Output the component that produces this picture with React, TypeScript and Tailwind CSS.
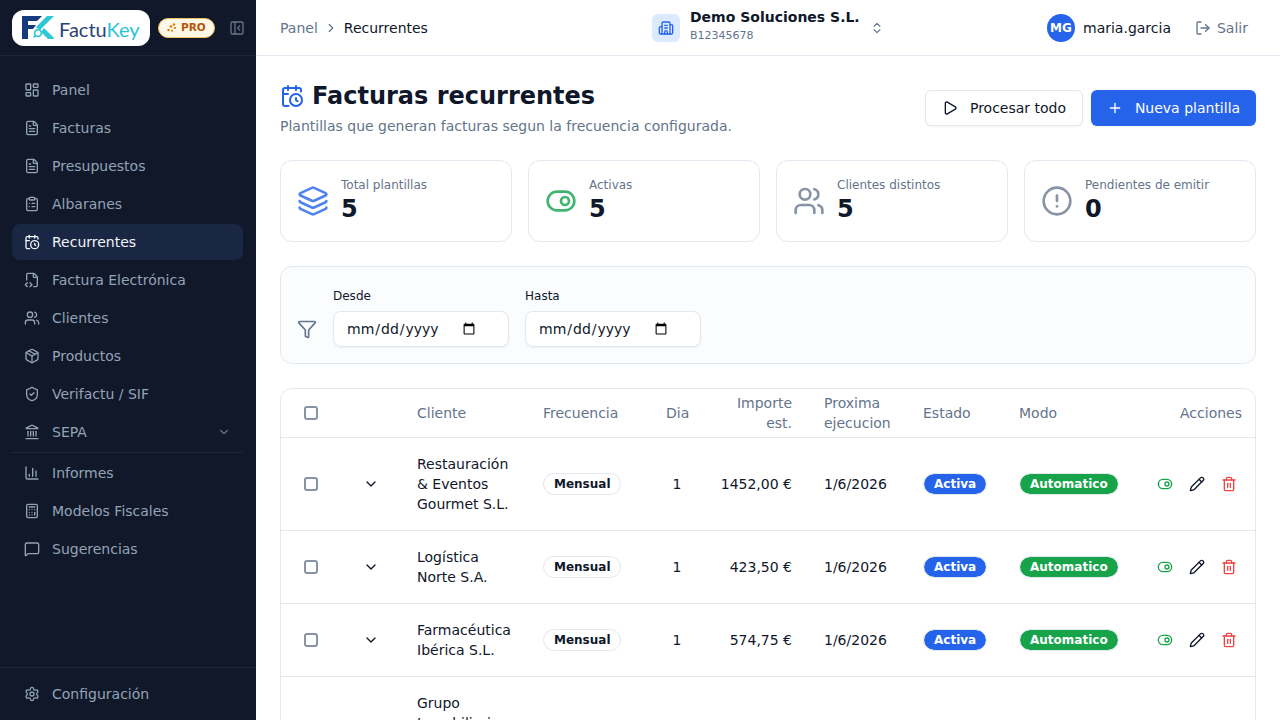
import React from "react";
import {
  LayoutDashboard, FileText, ClipboardList, CalendarClock, FileCode2, Users, Package, ShieldCheck, Landmark,
  ChartColumn, Calculator, MessageSquare, Settings, PanelLeftClose, ChevronRight, ChevronDown, ChevronsUpDown,
  Building2, LogOut, Play, Plus, Layers, ToggleRight, CircleAlert, Funnel, Pencil, Trash2,
} from "lucide-react";

const top = [
  { label: "Panel", Icon: LayoutDashboard },
  { label: "Facturas", Icon: FileText },
  { label: "Presupuestos", Icon: FileText },
  { label: "Albaranes", Icon: ClipboardList },
  { label: "Recurrentes", Icon: CalendarClock, active: true },
  { label: "Factura Electrónica", Icon: FileCode2 },
  { label: "Clientes", Icon: Users },
  { label: "Productos", Icon: Package },
  { label: "Verifactu / SIF", Icon: ShieldCheck },
  { label: "SEPA", Icon: Landmark, caret: true },
];
const bottom = [
  { label: "Informes", Icon: ChartColumn },
  { label: "Modelos Fiscales", Icon: Calculator },
  { label: "Sugerencias", Icon: MessageSquare },
];

type Item = { label: string; Icon: React.ComponentType<any>; active?: boolean; caret?: boolean };

function NavItem({ label, Icon, active, caret }: Item) {
  return (
    <div className={`flex h-9 items-center gap-3 rounded-lg px-3 text-sm ${active ? "bg-[#1a2744] text-[#f1f5f9]" : "text-[#94a3b8]"}`}>
      <Icon size={16} strokeWidth={2} className="shrink-0" />
      <span className="flex-1">{label}</span>
      {caret && <ChevronDown size={14} className="text-[#64748b]" />}
    </div>
  );
}

function Logo() {
  return (
    <div className="flex h-9 w-[138px] items-center gap-[5px] rounded-xl bg-white pl-[9px]">
      <svg width="33" height="26" viewBox="0 0 33 26" fill="none" className="shrink-0">
        <path d="M1 1h20l-5 5H7v4h8l-3 4H7v10H1z" fill="#153a7d" />
        <path d="M33 1h-7L15 12l4 3z" fill="#2fc6d6" />
        <path d="M23 13l11 11h-7l-7-7z" fill="#2fc6d6" />
        <circle cx="17" cy="18" r="3.4" fill="#fff" stroke="#2fc6d6" strokeWidth="1.7" />
        <path d="M14.5 20.5l-2 2" stroke="#2fc6d6" strokeWidth="1.7" />
      </svg>
      <span className="mt-[2px] font-['Lato',sans-serif] text-[20px] leading-none">
        <span className="text-[#2b4278]">Factu</span>
        <span className="text-[#2bc4d6]">Key</span>
      </span>
    </div>
  );
}

function Sidebar() {
  return (
    <aside className="flex h-full w-64 shrink-0 flex-col bg-[#101829]">
      <div className="flex h-14 shrink-0 items-center border-b border-[#1a2539] pl-3 pr-[11px]">
        <Logo />
        <div className="ml-2 flex h-5 w-[57px] items-center gap-1 rounded-full border border-[#f0c15c] bg-[#fff8e6] pl-2 text-[10.5px] font-bold text-[#b45309]">
          <svg width="10" height="10" viewBox="0 0 10 10" fill="#d97706" className="shrink-0">
            <circle cx="7" cy="1.5" r="1.2" /><circle cx="4" cy="3.5" r="1.3" /><circle cx="8" cy="5" r="1.1" /><circle cx="1.5" cy="7" r="1.2" /><circle cx="5" cy="7.8" r="1" />
          </svg>
          PRO
        </div>
        <PanelLeftClose size={16} className="ml-auto text-[#64748b]" />
      </div>
      <nav className="flex flex-1 flex-col pl-3 pr-[13px] pt-4">
        <div className="flex flex-col gap-[2px]">
          {top.map((i) => <NavItem key={i.label} {...i} />)}
        </div>
        <div className="mb-[2px] mt-[2px] h-px bg-[#1e293b]" />
        <div className="flex flex-col gap-[2px]">
          {bottom.map((i) => <NavItem key={i.label} {...i} />)}
        </div>
      </nav>
      <div className="border-t border-[#1e293b] px-3 pb-2 pt-2">
        <NavItem label="Configuración" Icon={Settings} />
      </div>
    </aside>
  );
}

function Header() {
  return (
    <header className="flex h-14 shrink-0 items-center border-b border-[#e2e8f0] bg-white pl-6 pr-8">
      <div className="flex w-[372px] items-center gap-[6px] text-sm">
        <span className="text-[#64748b]">Panel</span>
        <ChevronRight size={14} className="text-[#64748b]" />
        <span className="text-[#0f172a]">Recurrentes</span>
      </div>
      <div className="flex items-center">
        <div className="flex h-7 w-7 items-center justify-center rounded-md bg-[#dbeafe]">
          <Building2 size={16} className="text-[#2563eb]" />
        </div>
        <div className="ml-[10px] -mt-[4px] flex flex-col">
          <span className="text-sm font-bold leading-5 text-[#0f172a]">Demo Soluciones S.L.</span>
          <span className="mt-px text-[11px] leading-4 text-[#64748b]">B12345678</span>
        </div>
        <ChevronsUpDown size={14} className="ml-[10px] text-[#64748b]" />
      </div>
      <div className="ml-auto flex items-center">
        <div className="flex h-7 w-7 items-center justify-center rounded-full bg-[#2563eb] text-xs font-bold text-white">MG</div>
        <span className="ml-2 text-sm text-[#0f172a]">maria.garcia</span>
        <span className="ml-6 flex items-center gap-[6px] text-sm text-[#64748b]">
          <LogOut size={16} /> Salir
        </span>
      </div>
    </header>
  );
}

function Stat({ Icon, label, value, color }: { Icon: React.ComponentType<any>; label: string; value: string; color: string }) {
  return (
    <div className="flex h-[82px] items-center gap-3 rounded-xl border border-[#e2e8f0] bg-white px-4">
      <Icon size={32} className={color} strokeWidth={2} />
      <div className="pb-[2px]">
        <div className="mb-[2px] text-xs leading-4 text-[#64748b]">{label}</div>
        <div className="text-2xl font-bold leading-7 text-[#0f172a]">{value}</div>
      </div>
    </div>
  );
}

function DateField({ label }: { label: string }) {
  return (
    <label className="flex flex-col gap-[7px]">
      <span className="text-xs font-medium leading-4 text-[#0f172a]">{label}</span>
      <input type="date" className="h-9 w-[176px] rounded-lg border border-[#e2e8f0] bg-white pl-3 pr-[30px] text-sm text-[#0f172a] shadow-xs" />
    </label>
  );
}

const rows = [
  { name: ["Restauración", "& Eventos", "Gourmet S.L."], amount: "1452,00 €" },
  { name: ["Logística", "Norte S.A."], amount: "423,50 €" },
  { name: ["Farmacéutica", "Ibérica S.L."], amount: "574,75 €" },
];

function Check() {
  return <span className="mx-auto block h-[14px] w-[14px] rounded-[3px] border-2 border-[#8894a6] bg-white" />;
}

function Row({ name, amount }: { name: string[]; amount: string }) {
  return (
    <tr className="border-b border-[#e2e8f0] text-[13px] text-[#0f172a]">
      <td className="py-4"><Check /></td>
      <td className="py-4"><ChevronDown size={16} className="mx-auto" /></td>
      <td className="px-4 py-4 text-sm leading-5">{name.map((n) => <div key={n}>{n}</div>)}</td>
      <td className="px-4 py-4">
        <span className="inline-flex h-[22px] items-center rounded-full border border-[#e2e8f0] bg-white pl-[10px] pr-[9px] text-xs font-bold">Mensual</span>
      </td>
      <td className="px-4 py-4 text-center text-sm">1</td>
      <td className="px-4 py-4 text-right text-sm">{amount}</td>
      <td className="px-4 py-4 text-sm">1/6/2026</td>
      <td className="px-4 py-4">
        <span className="inline-flex h-[22px] items-center rounded-full border border-[#e2e8f0] bg-[#2563eb] bg-clip-padding px-[10px] text-xs font-bold text-white">Activa</span>
      </td>
      <td className="px-4 py-4">
        <span className="inline-flex h-[22px] items-center rounded-full border border-[#e2e8f0] bg-[#16a34a] bg-clip-padding px-[10px] text-xs font-bold text-white">Automatico</span>
      </td>
      <td className="py-4 pr-[18px]">
        <div className="flex items-center justify-end gap-4">
          <ToggleRight size={16} className="text-[#16a34a]" />
          <Pencil size={16} className="text-[#0f172a]" />
          <Trash2 size={16} className="text-[#ef4444]" />
        </div>
      </td>
    </tr>
  );
}

function Table() {
  return (
    <div className="rounded-xl border border-[#e2e8f0] bg-white">
      <table className="w-full table-fixed border-collapse">
        <colgroup>
          <col className="w-[60px]" /><col className="w-[60px]" /><col className="w-[126px]" /><col className="w-[123px]" />
          <col className="w-[54px]" /><col className="w-[104px]" /><col className="w-[99px]" /><col className="w-[96px]" />
          <col className="w-[132px]" /><col />
        </colgroup>
        <thead>
          <tr className="h-[48px] border-b border-[#e2e8f0] text-left text-sm font-normal text-[#64748b]">
            <th className="font-normal"><Check /></th>
            <th className="font-normal" />
            <th className="px-4 font-normal">Cliente</th>
            <th className="px-4 font-normal">Frecuencia</th>
            <th className="px-4 text-center font-normal">Dia</th>
            <th className="px-4 text-right font-normal leading-5">Importe est.</th>
            <th className="px-4 font-normal leading-5">Proxima ejecucion</th>
            <th className="px-4 font-normal">Estado</th>
            <th className="px-4 font-normal">Modo</th>
            <th className="pr-[13px] text-right font-normal">Acciones</th>
          </tr>
        </thead>
        <tbody>
          {rows.map((r) => <Row key={r.amount} {...r} />)}
          <tr className="text-sm text-[#0f172a]">
            <td /><td />
            <td className="px-4 py-4 leading-5"><div>Grupo</div><div>Inmobiliario</div><div>Levante S.L.</div></td>
            <td colSpan={7} />
          </tr>
        </tbody>
      </table>
    </div>
  );
}

export default function App() {
  return (
    <div className="flex h-screen w-full overflow-hidden bg-white font-['DejaVu_Sans','Liberation_Sans',sans-serif]">
      <Sidebar />
      <div className="flex min-w-0 flex-1 flex-col">
        <Header />
        <main className="flex flex-1 flex-col overflow-hidden px-6 pt-6">
          <div className="flex items-start justify-between">
            <div>
              <h1 className="flex items-center gap-2 text-2xl font-bold leading-8 text-[#0f172a]">
                <CalendarClock size={24} className="text-[#2563eb]" /> Facturas recurrentes
              </h1>
              <p className="mt-1 text-sm leading-5 text-[#64748b]">Plantillas que generan facturas segun la frecuencia configurada.</p>
            </div>
            <div className="mt-[10px] flex gap-2">
              <button className="flex h-9 w-[158px] items-center justify-center gap-3 rounded-md border border-[#e2e8f0] bg-white text-sm text-[#0f172a] shadow-xs">
                <Play size={16} /> Procesar todo
              </button>
              <button className="flex h-9 w-[165px] items-center justify-center gap-3 rounded-md bg-[#2563eb] text-sm text-white shadow-xs">
                <Plus size={16} /> Nueva plantilla
              </button>
            </div>
          </div>
          <div className="mt-[24px] grid shrink-0 grid-cols-4 gap-4">
            <Stat Icon={Layers} label="Total plantillas" value="5" color="text-[#4f83f1]" />
            <Stat Icon={ToggleRight} label="Activas" value="5" color="text-[#3fb56f]" />
            <Stat Icon={Users} label="Clientes distintos" value="5" color="text-[#8894a6]" />
            <Stat Icon={CircleAlert} label="Pendientes de emitir" value="0" color="text-[#8894a6]" />
          </div>
          <div className="mt-6 flex h-[98px] shrink-0 items-end gap-4 rounded-xl border border-[#e2e8f0] bg-[#fbfcfe] px-4 pb-4">
            <Funnel size={20} className="mb-2 text-[#64748b]" />
            <DateField label="Desde" />
            <DateField label="Hasta" />
          </div>
          <div className="mt-6 shrink-0">
            <Table />
          </div>
        </main>
      </div>
    </div>
  );
}
